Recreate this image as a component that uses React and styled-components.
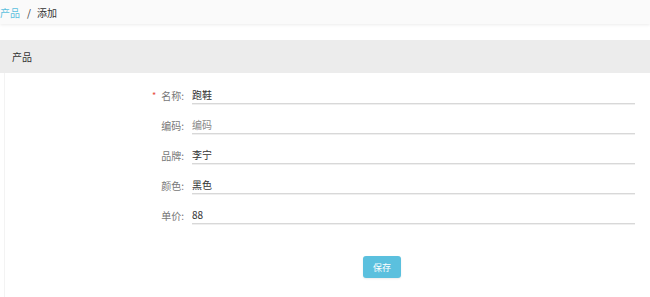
import { Fragment } from 'react';
import styled, { createGlobalStyle } from 'styled-components';

const GlobalStyle = createGlobalStyle`
  html, body {
    margin: 0;
    padding: 0;
    background: #fff;
    font-family: "Noto Sans CJK SC", "Noto Sans", sans-serif;
  }
`;

const TopBar = styled.div`
  height: 24px;
  background: #fafafa;
  box-shadow: 0 1px 3px rgba(0, 0, 0, 0.08);
  display: flex;
  align-items: center;
  font-size: 10px;
  color: #333;
  position: relative;
  z-index: 1;
  a {
    color: #5bc0de;
    text-decoration: none;
  }
  .sep {
    margin: 0 6px 0 7px;
  }
`;

const Panel = styled.div`
  margin-top: 16px;
`;

const PanelHeading = styled.div`
  height: 33px;
  background: #ececec;
  display: flex;
  align-items: center;
  padding-left: 12px;
  font-size: 10px;
  color: #333;
`;

const PanelBody = styled.div`
  padding: 13px 0 20px;
  border-left: 1px solid #f3f3f3;
  margin-left: 4px;
`;

const Form = styled.div`
  display: grid;
  grid-template-columns: 179px 443px;
  column-gap: 8px;
  row-gap: 12px;
`;

const Label = styled.label`
  display: flex;
  align-items: center;
  justify-content: flex-end;
  font-size: 10px;
  color: #777;
  height: 18px;
  &::before {
    content: ${({ $required }) => ($required ? '"*"' : 'none')};
    color: #e74c3c;
    margin-right: 5px;
    font-size: 9px;
  }
`;

const Input = styled.input`
  height: 18px;
  box-sizing: border-box;
  border: none;
  border-bottom: 1px solid #d8d8d8;
  box-shadow: 0 1px 0 #efefef;
  padding: 0;
  font-family: inherit;
  font-size: 10px;
  color: #333;
  outline: none;
  background: transparent;
  &::placeholder {
    color: #888;
  }
`;

const Actions = styled.div`
  grid-column: 2;
  margin-top: 20px;
  padding-left: 171px;
`;

const Button = styled.button`
  display: block;
  width: 38px;
  height: 22px;
  border: none;
  border-radius: 3px;
  background: #5bc0de;
  color: #fff;
  font-family: inherit;
  font-size: 9px;
  padding: 0;
  box-shadow: 0 1px 2px rgba(0, 0, 0, 0.08);
`;

const fields = [
  { label: '名称:', value: '跑鞋', required: true },
  { label: '编码:', placeholder: '编码' },
  { label: '品牌:', value: '李宁' },
  { label: '颜色:', value: '黑色' },
  { label: '单价:', value: '88' },
];

export default function App() {
  return (
    <>
      <GlobalStyle />
      <TopBar>
        <a href="#">产品</a>
        <span className="sep">/</span>
        <span>添加</span>
      </TopBar>
      <Panel>
        <PanelHeading>产品</PanelHeading>
        <PanelBody>
          <Form>
            {fields.map((f) => (
              <Fragment key={f.label}>
                <Label $required={f.required}>{f.label}</Label>
                <Input defaultValue={f.value} placeholder={f.placeholder} />
              </Fragment>
            ))}
            <Actions>
              <Button>保存</Button>
            </Actions>
          </Form>
        </PanelBody>
      </Panel>
    </>
  );
}
